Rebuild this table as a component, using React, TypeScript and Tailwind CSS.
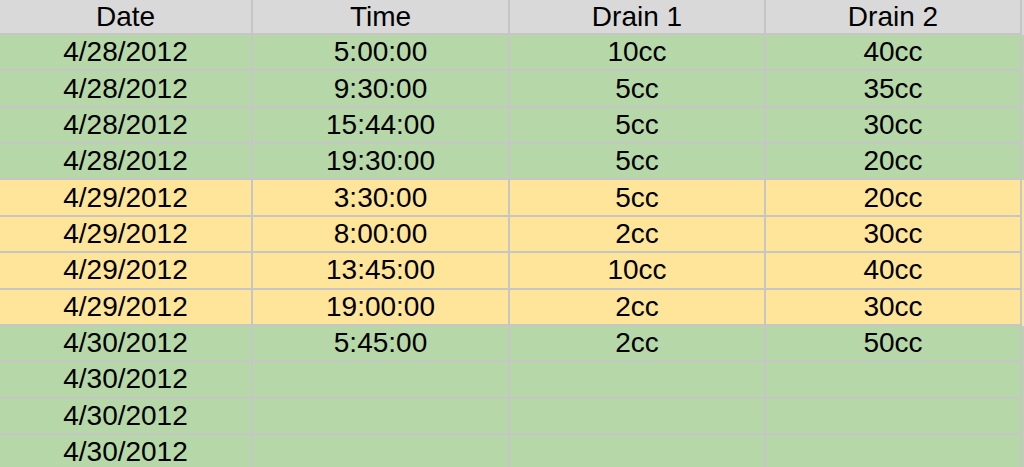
import React from "react";

const rows: { d: string; t: string; a: string; b: string; y: boolean }[] = [
  { d: "4/28/2012", t: "5:00:00", a: "10cc", b: "40cc", y: false },
  { d: "4/28/2012", t: "9:30:00", a: "5cc", b: "35cc", y: false },
  { d: "4/28/2012", t: "15:44:00", a: "5cc", b: "30cc", y: false },
  { d: "4/28/2012", t: "19:30:00", a: "5cc", b: "20cc", y: false },
  { d: "4/29/2012", t: "3:30:00", a: "5cc", b: "20cc", y: true },
  { d: "4/29/2012", t: "8:00:00", a: "2cc", b: "30cc", y: true },
  { d: "4/29/2012", t: "13:45:00", a: "10cc", b: "40cc", y: true },
  { d: "4/29/2012", t: "19:00:00", a: "2cc", b: "30cc", y: true },
  { d: "4/30/2012", t: "5:45:00", a: "2cc", b: "50cc", y: false },
  { d: "4/30/2012", t: "", a: "", b: "", y: false },
  { d: "4/30/2012", t: "", a: "", b: "", y: false },
  { d: "4/30/2012", t: "", a: "", b: "", y: false },
];

const cell = "flex items-center justify-center border-r-2 border-b-2 border-[#c6c6c6]";

export default function App() {
  return (
    <div
      className="w-[1024px] h-[467px] overflow-hidden bg-[#e4e4e4] text-black text-[28px] leading-none"
      style={{ fontFamily: '"Liberation Sans", Arial, sans-serif' }}
    >
      <div className="flex h-[35px] bg-[#d9d9d9]">
        <div className={`${cell} w-[253px]`}>Date</div>
        <div className={`${cell} w-[257px]`}>Time</div>
        <div className={`${cell} w-[256px]`}>Drain 1</div>
        <div className={`${cell} w-[256px]`}>Drain 2</div>
      </div>
      {rows.map((r, i) => (
        <div key={i} className={`flex h-[36.36px] ${r.y ? "bg-[#ffe599]" : "bg-[#b6d7a8]"}`}>
          <div className={`${cell} w-[253px]`}>{r.d}</div>
          <div className={`${cell} w-[257px]`}>{r.t}</div>
          <div className={`${cell} w-[256px]`}>{r.a}</div>
          <div className={`${cell} w-[256px]`}>{r.b}</div>
        </div>
      ))}
    </div>
  );
}
